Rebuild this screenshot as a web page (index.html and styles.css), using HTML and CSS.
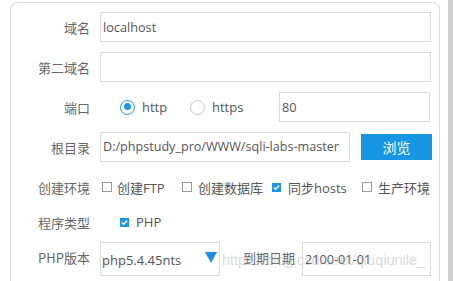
FILE: index.html
```html
<!DOCTYPE html>
<html lang="zh">
<head>
<meta charset="utf-8">
<link rel="stylesheet" href="styles.css">
</head>
<body>
<div class="page">
  <div class="panel">
    <div class="row">
      <label class="lbl">域名</label>
      <div class="field"><div class="input">localhost</div></div>
    </div>
    <div class="row">
      <label class="lbl">第二域名</label>
      <div class="field"><div class="input"></div></div>
    </div>
    <div class="row">
      <label class="lbl">端口</label>
      <div class="field port">
        <span class="radio on"></span><span class="rtext">http</span>
        <span class="radio off"></span><span class="rtext">https</span>
        <div class="input portin">80</div>
      </div>
    </div>
    <div class="row">
      <label class="lbl">根目录</label>
      <div class="field root">
        <div class="input rootin">D:/phpstudy_pro/WWW/sqli-labs-master</div>
        <button class="btn">浏览</button>
      </div>
    </div>
    <div class="row crow">
      <label class="lbl">创建环境</label>
      <div class="field checks">
        <span class="cb first"></span><span class="ctext w1">创建FTP</span>
        <span class="cb"></span><span class="ctext w2">创建数据库</span>
        <span class="cb checked"><svg viewBox="0 0 9 9" width="9" height="9"><path d="M1.8 4.6 L3.7 6.3 L7.2 2.6" fill="none" stroke="#fff" stroke-width="1.4"/></svg></span><span class="ctext w3">同步hosts</span>
        <span class="cb"></span><span class="ctext w4">生产环境</span>
      </div>
    </div>
    <div class="row crow2">
      <label class="lbl">程序类型</label>
      <div class="field checks indent">
        <span class="cb checked"><svg viewBox="0 0 9 9" width="9" height="9"><path d="M1.8 4.6 L3.7 6.3 L7.2 2.6" fill="none" stroke="#fff" stroke-width="1.4"/></svg></span><span class="ctext">PHP</span>
      </div>
    </div>
    <div class="row last">
      <label class="lbl">PHP版本</label>
      <div class="field ver">
        <div class="select"><span>php5.4.45nts</span><span class="tri"></span></div>
        <span class="lbl2">到期日期</span>
        <div class="input datein">2100-01-01</div>
      </div>
    </div>
  </div>
  <div class="strip"></div>
  <div class="watermark">https://blog.csdn.net/qiuqiunile_</div>
</div>
</body>
</html>
```

FILE: styles.css
```css
html, body {
  margin: 0;
  padding: 0;
  background: #fff;
  width: 453px;
  height: 281px;
  overflow: hidden;
}
.page {
  position: relative;
  width: 453px;
  height: 281px;
  overflow: hidden;
  font-family: "Open Sans", "Noto Sans CJK SC", sans-serif;
  font-size: 13px;
  color: #555;
}
.panel {
  position: absolute;
  left: 10px;
  top: 2px;
  width: 428px;
  height: 269px;
  border: 1px solid #dcdcdc;
  border-bottom: none;
  border-radius: 8px 8px 0 0;
  padding-top: 9px;
  box-sizing: content-box;
}
.strip {
  position: absolute;
  left: 448px;
  top: 0;
  width: 5px;
  height: 281px;
  background: #cfcfcf;
}
.row {
  display: flex;
  align-items: center;
  height: 30px;
  margin-bottom: 10px;
}
.row.crow { height: 30px; margin-bottom: 5px; }
.row.crow2 { height: 30px; margin-bottom: 5px; }
.lbl {
  width: 79px;
  text-align: right;
  color: #666;
  font-family: "Noto Sans CJK SC", sans-serif;
  font-size: 13px;
  flex: none;
}
.field {
  margin-left: 10px;
  flex: none;
  width: 331px;
  height: 30px;
  display: flex;
  align-items: center;
}
.input {
  box-sizing: border-box;
  width: 331px;
  height: 30px;
  border: 1px solid #dcdcdc;
  padding-left: 2px;
  line-height: 28px;
  font-size: 12.7px;
  color: #555;
  white-space: nowrap;
  overflow: hidden;
  flex: none;
}
.radio {
  box-sizing: border-box;
  width: 15px;
  height: 15px;
  border-radius: 50%;
  flex: none;
  background: #fff;
}
.radio.on {
  margin-left: 20px;
  border: 1.5px solid #1e96e6;
  position: relative;
}
.radio.on::after {
  content: "";
  position: absolute;
  left: 2.5px;
  top: 2.5px;
  width: 7px;
  height: 7px;
  border-radius: 50%;
  background: #1e96e6;
}
.radio.off {
  border: 1px solid #c8c8c8;
}
.rtext {
  margin-left: 7px;
  width: 48px;
  flex: none;
}
.portin {
  width: 151px;
  margin-left: 19px;
}
.rootin {
  width: 250px;
  font-size: 12.6px;
}
.btn {
  margin-left: 11px;
  width: 71px;
  height: 26px;
  border: none;
  background: #1896e4;
  color: #fff;
  font-family: "Noto Sans CJK SC", sans-serif;
  font-size: 14px;
  padding: 0;
  flex: none;
}
.checks .cb {
  box-sizing: border-box;
  width: 10px;
  height: 10px;
  border: 1px solid #999;
  flex: none;
  display: flex;
}
.checks .cb.first { margin-left: 2px; }
.checks .cb + .ctext { margin-left: 6px; }
.checks .cb.first + .ctext { margin-left: 5px; }
.checks .cb.checked {
  border: none;
  width: 9px;
  height: 9px;
  background: #1e96e6;
}
.checks .cb.checked + .ctext { margin-left: 7px; }
.ctext {
  font-family: "Open Sans", "Noto Sans CJK SC", sans-serif;
  color: #555;
  white-space: nowrap;
  flex: none;
}
.ctext.w1 { width: 65px; }
.ctext.w2 { width: 74px; }
.ctext.w3 { width: 74px; }
.ctext.w4 { width: 53px; }
.indent .cb.checked { margin-left: 20px; }
.select {
  box-sizing: border-box;
  width: 120px;
  height: 34px;
  border: 1px solid #dcdcdc;
  display: flex;
  align-items: center;
  padding-left: 1px;
  padding-top: 1px;
  position: relative;
  flex: none;
}
.tri {
  position: absolute;
  left: 104px;
  top: 9px;
  width: 0;
  height: 0;
  border-left: 6.5px solid transparent;
  border-right: 6.5px solid transparent;
  border-top: 11px solid #1e8fe6;
}
.row.last { align-items: flex-start; height: 34px; margin-bottom: 0; }
.row.last .lbl { line-height: 32px; }
.row.last .field { align-items: flex-start; height: 34px; }
.lbl2 {
  margin-left: 23px;
  width: 59px;
  line-height: 32px;
  color: #666;
  font-family: "Noto Sans CJK SC", sans-serif;
  flex: none;
}
.datein {
  width: 129px;
  height: 34px;
  line-height: 32px;
}
.watermark {
  position: absolute;
  left: 222px;
  top: 252px;
  font-family: "Liberation Sans", sans-serif;
  font-size: 14.5px;
  color: rgba(170, 170, 170, 0.45);
  white-space: nowrap;
  pointer-events: none;
}
```
